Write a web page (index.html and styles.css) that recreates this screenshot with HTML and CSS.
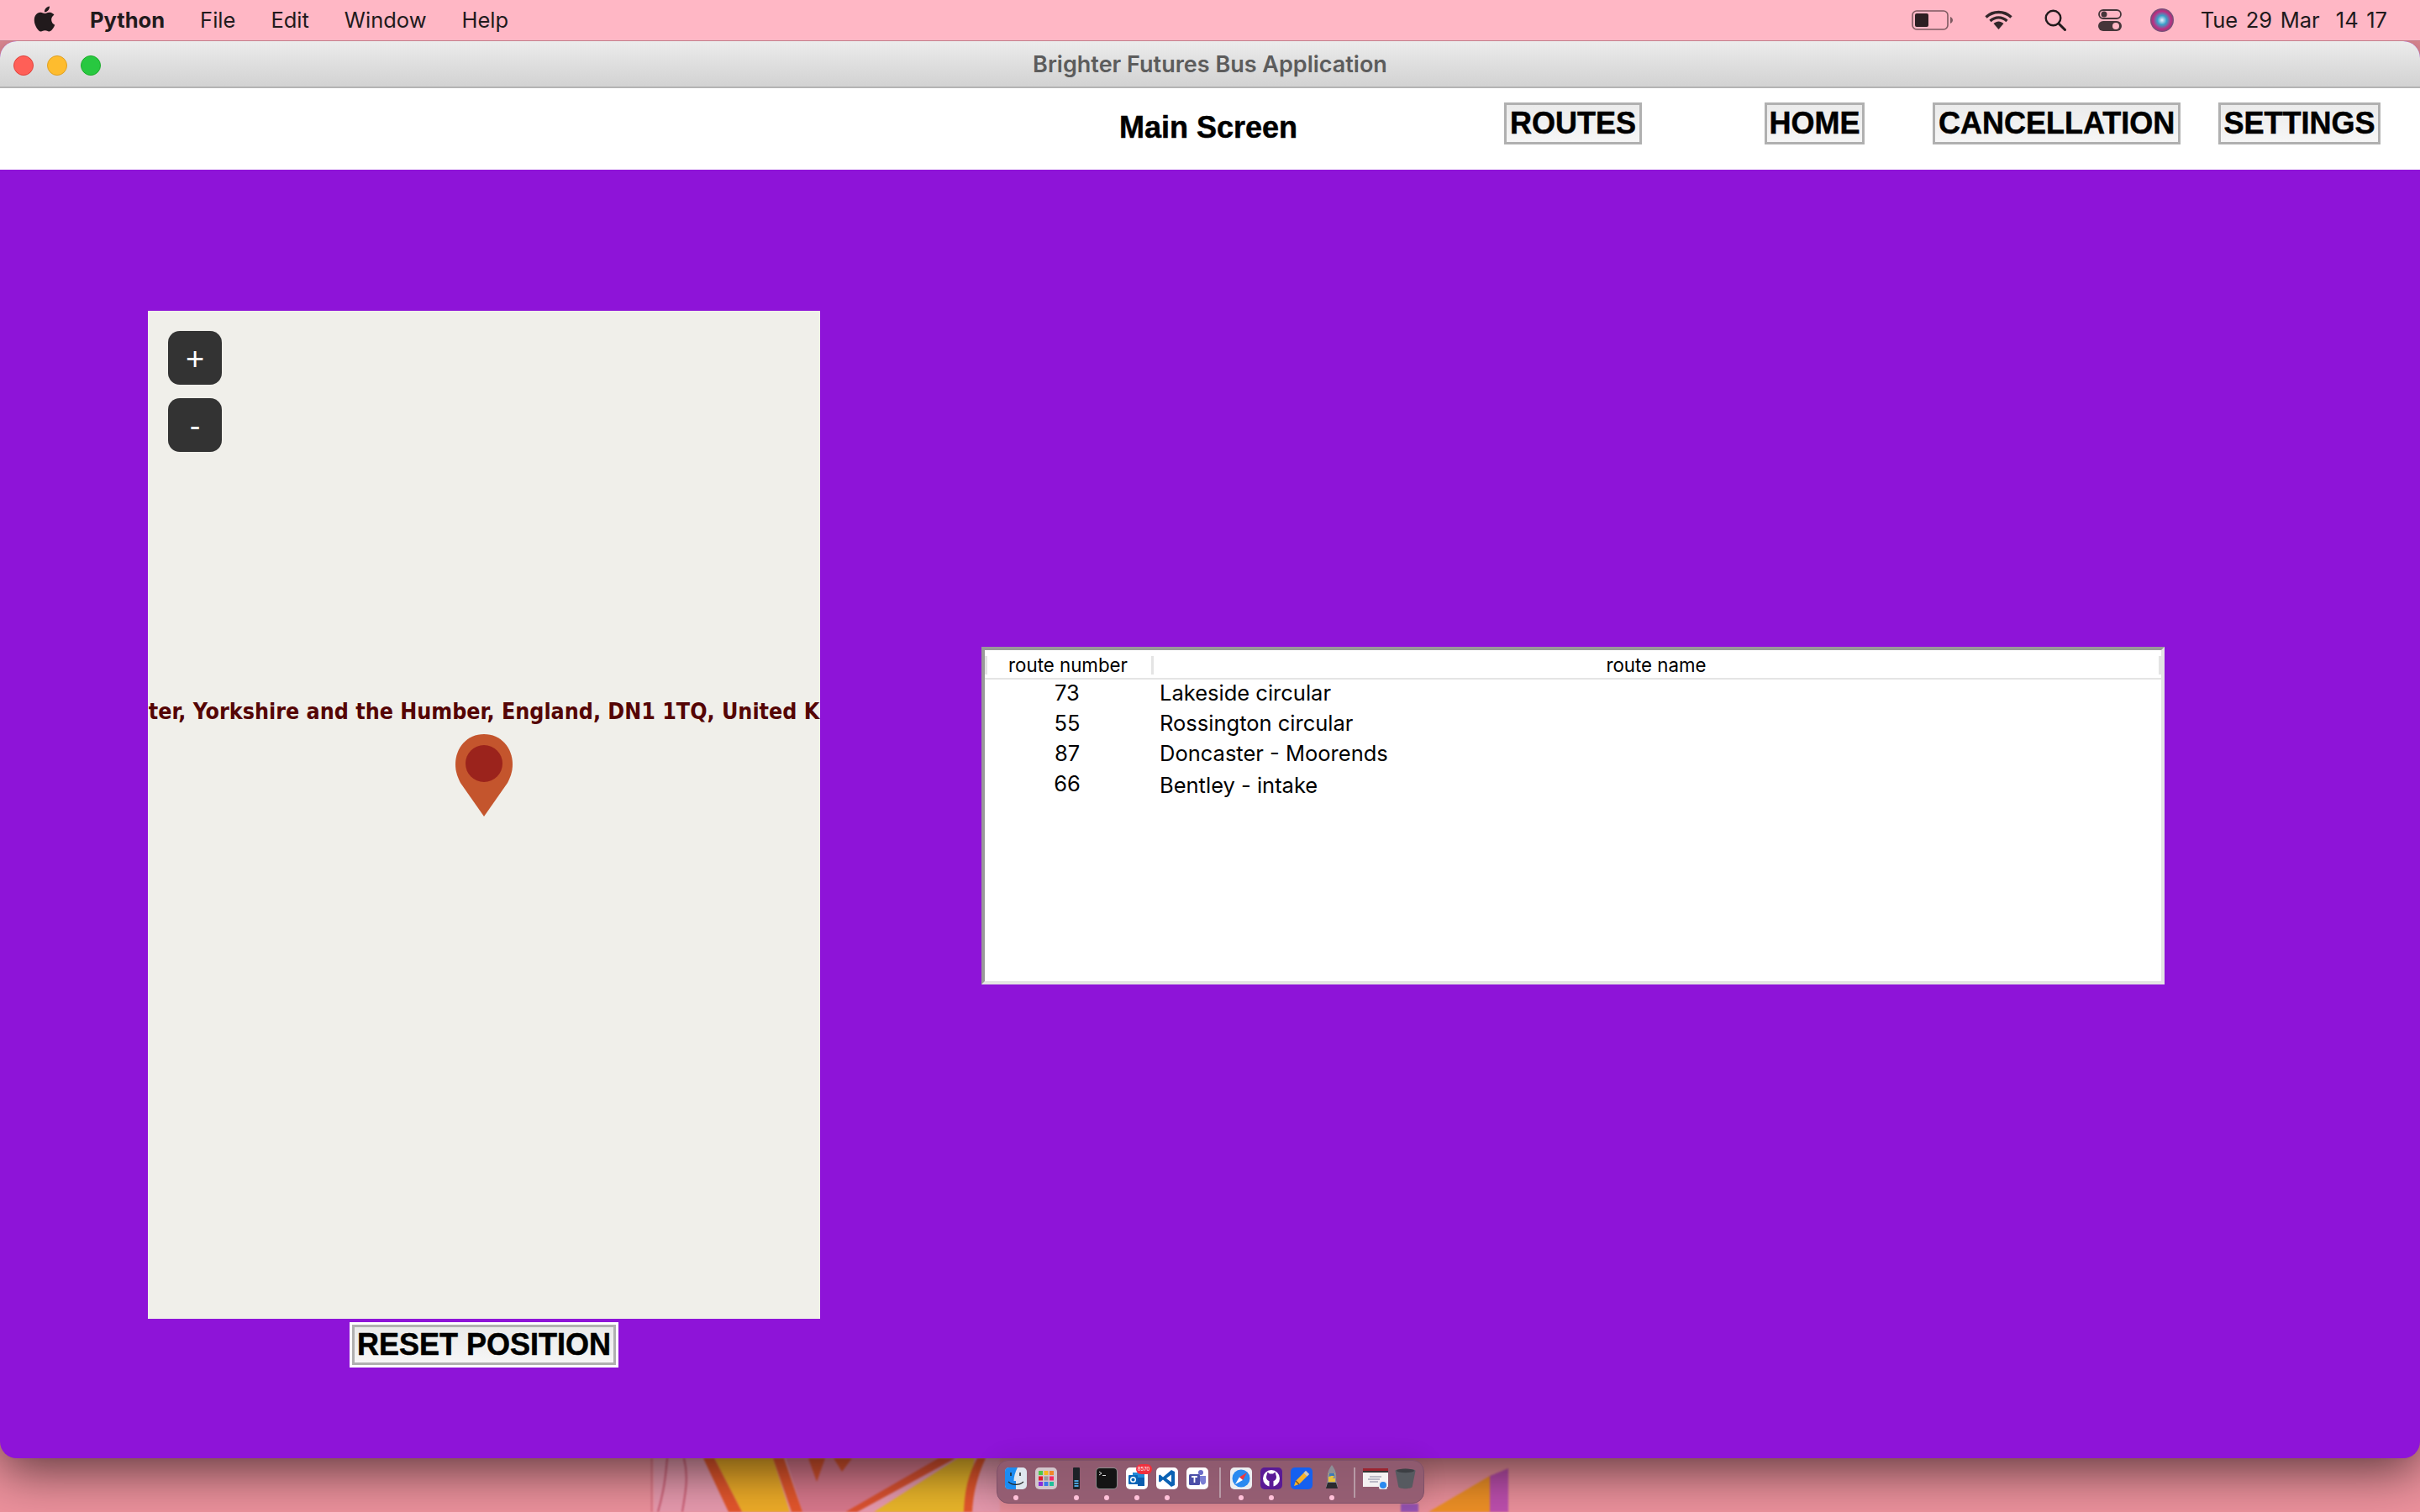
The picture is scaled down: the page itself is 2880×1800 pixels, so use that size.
FILE: index.html
```html
<!DOCTYPE html>
<html lang="en">
<head>
    <meta charset="UTF-8">
    <meta name="viewport" content="width=device-width, initial-scale=1.0">
    <title>Brighter Futures Bus Application</title>
    <link rel="stylesheet" href="styles.css">
</head>
<body>
<div class="screen">

  <!-- Wallpaper strip under the window -->
  <svg class="wallpaper" width="1100" height="64" viewBox="775 1736 1100 64">
    <path d="M778 1736H1190V1800H778Z" fill="#e79aae"/>
    <path d="M935 1736H1120L1006 1800H955Z" fill="#d8788c"/>
    <path d="M775 1736V1800M794 1736C792 1760 790 1775 783 1800M814 1736C820 1760 815 1780 812 1800" fill="none" stroke="#c95a70" stroke-width="2"/>
    <path d="M850 1736H920L940 1800H883Z" fill="#eeac28"/>
    <path d="M837 1736L867 1800H883L850 1736Z" fill="#e4562c"/>
    <path d="M920 1736L942 1800H955L933 1736Z" fill="#e4562c"/>
    <path d="M962 1736L972 1764L982 1736ZM992 1736L1002 1752L1014 1736Z" fill="#d9532e"/>
    <path d="M1117 1736H1137L1020 1800H1006Z" fill="#dc5230"/>
    <path d="M1140 1736H1160L1147 1800H1040Z" fill="#eab62a"/>
    <path d="M1163 1736H1173C1162 1760 1158 1780 1157 1800H1147C1148 1780 1150 1760 1163 1736Z" fill="#e4562c"/>
    <path d="M1700 1800L1773 1757V1800Z" fill="#ee9026"/>
    <path d="M1773 1757L1795 1748V1800H1773Z" fill="#bd4fae"/>
    <path d="M1667 1790H1688V1800H1667Z" fill="#9a56b8"/>
  </svg>

  <!-- Menu bar -->
  <header class="menubar">
    <svg class="apple" viewBox="0 0 24 24"><path fill="#211a1c" d="M12.152 6.896c-.948 0-2.415-1.078-3.96-1.04-2.04.027-3.91 1.183-4.961 3.014-2.117 3.675-.546 9.103 1.519 12.09 1.013 1.454 2.208 3.09 3.792 3.039 1.52-.065 2.09-.987 3.935-.987 1.831 0 2.35.987 3.96.948 1.637-.026 2.676-1.48 3.676-2.948 1.156-1.688 1.636-3.325 1.662-3.415-.039-.013-3.182-1.221-3.22-4.857-.026-3.04 2.48-4.494 2.597-4.559-1.429-2.09-3.623-2.324-4.39-2.376-2-.156-3.675 1.09-4.61 1.09zM15.53 3.83c.843-1.012 1.4-2.427 1.245-3.83-1.207.052-2.662.805-3.532 1.818-.78.896-1.454 2.338-1.273 3.714 1.338.104 2.715-.688 3.559-1.701"/></svg>
    <nav class="menu-items">
      <span class="app-name">Python</span>
      <span>File</span>
      <span>Edit</span>
      <span>Window</span>
      <span>Help</span>
    </nav>
    <div class="status">
      <svg class="st-battery" width="50" height="24" viewBox="0 0 50 24">
        <rect x="1" y="1" width="42" height="22" rx="5" fill="none" stroke="#7d5a60" stroke-width="1.6"/>
        <rect x="4" y="4" width="16" height="16" rx="2" fill="#2c1f22"/>
        <path d="M46 8C48 9 49 10.5 49 12S48 15 46 16Z" fill="#7d5a60"/>
      </svg>
      <svg class="st-wifi" width="33" height="24" viewBox="0 0 33 24">
        <path d="M1.5 8.5C10 .5 23 .5 31.5 8.5M6.5 13C12.5 7.5 20.5 7.500 26.500 13" fill="none" stroke="#33262a" stroke-width="3.400"/>
        <path d="M10.500 16C14.500 12.500 18.500 12.500 22.500 16L16.500 23Z" fill="#33262a"/>
      </svg>
      <svg class="st-search" width="26" height="26" viewBox="0 0 26 26">
        <circle cx="10.500" cy="10.500" r="8.800" fill="none" stroke="#211a1c" stroke-width="2.400"/>
        <path d="M17 17L24.500 24.500" stroke="#211a1c" stroke-width="3" stroke-linecap="round"/>
      </svg>
      <svg class="st-control" width="28" height="26" viewBox="0 0 28 26">
        <rect x="1" y="1" width="26" height="10" rx="5" fill="none" stroke="#46363a" stroke-width="1.800"/>
        <circle cx="7" cy="6" r="3.500" fill="#46363a"/>
        <rect y="14" width="28" height="12" rx="6" fill="#46363a"/>
        <circle cx="21" cy="20" r="4" fill="#ffb7c5"/>
      </svg>
      <span class="st-siri"></span>
      <span class="clock">Tue 29 Mar  14 17</span>
    </div>
  </header>

  <!-- App window -->
  <main class="window">
    <div class="titlebar">
      <div class="lights">
        <span class="light red"></span>
        <span class="light yellow"></span>
        <span class="light green"></span>
      </div>
      <span class="window-title">Brighter Futures Bus Application</span>
    </div>

    <div class="topbar">
      <h1 class="screen-title">Main Screen</h1>
      <button class="nav-btn routes">ROUTES</button>
      <button class="nav-btn home">HOME</button>
      <button class="nav-btn cancellation">CANCELLATION</button>
      <button class="nav-btn settings">SETTINGS</button>
    </div>

    <div class="content">
      <section class="map-col">
        <div class="map">
          <div class="zoom-controls">
            <button class="zoom-btn">+</button>
            <button class="zoom-btn">-</button>
          </div>
          <div class="map-label">ter, Yorkshire and the Humber, England, DN1 1TQ, United K</div>
          <svg class="map-pin" width="68" height="98" viewBox="0 0 68 98">
            <path d="M34 0C14 0 0 16 0 36C0 45 3 52 6 58L34 98L62 58C65 52 68 45 68 36C68 16 54 0 34 0Z" fill="#c4552d"/>
            <circle cx="34" cy="35" r="22" fill="#9b231c"/>
          </svg>
        </div>
        <button class="reset-btn">RESET POSITION</button>
      </section>

      <!-- Routes table -->
      <section class="routes-table">
        <div class="table-head">
          <div class="th th-number">route number</div>
          <div class="th th-name">route name</div>
        </div>
        <div class="table-row"><span class="td-number">73</span><span>Lakeside circular</span></div>
        <div class="table-row"><span class="td-number">55</span><span>Rossington circular</span></div>
        <div class="table-row"><span class="td-number">87</span><span>Doncaster - Moorends</span></div>
        <div class="table-row"><span class="td-number">66</span><span class="td-low">Bentley - intake</span></div>
      </section>
    </div>
  </main>

  <!-- Dock -->
  <div class="dock-area">
    <div class="dock">
      <div class="dock-item">
        <svg class="icon" viewBox="0 0 26 26">
          <rect width="26" height="26" rx="5" fill="#dfe6ee"/>
          <path d="M5 0H15C12 6 10.500 11 10.500 16H13V26H5Q0 26 0 21V5Q0 0 5 0Z" fill="#1c8cf2"/>
          <path d="M7 6V10M18 6V10" stroke="#222" stroke-width="1.500"/>
          <path d="M4 17C9 21.500 17 21.500 22 17" fill="none" stroke="#222" stroke-width="1.200"/>
        </svg>
        <span class="dot"></span>
      </div>
      <div class="dock-item">
        <svg class="icon" viewBox="0 0 26 26">
          <rect width="26" height="26" rx="5" fill="#d2c6cc"/>
          <rect x="4" y="4" width="5" height="5" fill="#4cc84a"/><rect x="10.500" y="4" width="5" height="5" fill="#f5b81e"/><rect x="17" y="4" width="5" height="5" fill="#f0862a"/>
          <rect x="4" y="10.500" width="5" height="5" fill="#e21a2c"/><rect x="10.500" y="10.500" width="5" height="5" fill="#9a9a9a"/><rect x="17" y="10.500" width="5" height="5" fill="#f02c68"/>
          <rect x="4" y="17" width="5" height="5" fill="#8a2cd8"/><rect x="10.500" y="17" width="5" height="5" fill="#3a78ea"/><rect x="17" y="17" width="5" height="5" fill="#20c09a"/>
        </svg>
        <span class="dot off"></span>
      </div>
      <div class="dock-item">
        <svg class="icon" viewBox="0 0 26 26">
          <rect x="9" width="8" height="26" rx="1" fill="#1c2228"/>
          <path d="M10.500 15H15.500V17H10.500ZM10.500 18H15.500V20H10.500ZM10.500 21H15.500V23H10.500Z" fill="#4aa0d8"/>
        </svg>
        <span class="dot"></span>
      </div>
      <div class="dock-item">
        <svg class="icon" viewBox="0 0 26 26">
          <rect width="26" height="26" rx="5" fill="#8c8c8c"/>
          <rect x="1" y="1" width="24" height="24" rx="4" fill="#141414"/>
          <path d="M4 5L7 7L4 9" fill="none" stroke="#ddd" stroke-width="1"/>
          <path d="M8 9.500H12" stroke="#ddd" stroke-width="1"/>
        </svg>
        <span class="dot"></span>
      </div>
      <div class="dock-item">
        <svg class="icon" viewBox="0 0 26 26">
          <rect width="26" height="26" rx="5" fill="#fff"/>
          <rect x="8" y="6" width="14" height="14" fill="#1f8ad8"/>
          <rect x="14" y="12" width="8" height="10" fill="#0b5cae"/>
          <rect x="3" y="9" width="11" height="11" rx="1" fill="#0a66b8"/>
          <circle cx="8.500" cy="14.500" r="2.800" fill="none" stroke="#fff" stroke-width="1.400"/>
        </svg>
        <span class="badge">8570</span>
        <span class="dot"></span>
      </div>
      <div class="dock-item">
        <svg class="icon" viewBox="0 0 26 26">
          <rect width="26" height="26" rx="5" fill="#fff"/>
          <path d="M18 3L22 5V21L18 23L8 14.500L4.500 17.500L3 16.500V9.500L4.500 8.500L8 11.500ZM18 8.500L12 13L18 17.500Z" fill="#0a62b4"/>
        </svg>
        <span class="dot"></span>
      </div>
      <div class="dock-item">
        <svg class="icon" viewBox="0 0 26 26">
          <rect width="26" height="26" rx="5" fill="#fff"/>
          <circle cx="17" cy="6" r="3" fill="#6a6cc8"/>
          <path d="M13 10H23V17C23 20 20 21 18 20Z" fill="#7b7fd4"/>
          <rect x="3" y="8" width="13" height="13" rx="1.500" fill="#4b4fa8"/>
          <path d="M6 11H13M9.500 11V18" stroke="#fff" stroke-width="1.800"/>
        </svg>
        <span class="dot off"></span>
      </div>
      <span class="dock-sep"></span>
      <div class="dock-item">
        <svg class="icon" viewBox="0 0 26 26">
          <rect width="26" height="26" rx="5" fill="#eceef0"/>
          <circle cx="13" cy="13" r="10.500" fill="#2a8af0"/>
          <path d="M20 6L11 11.500L15 15Z" fill="#f0383a"/>
          <path d="M6 20L11 11.500L15 15Z" fill="#fff"/>
        </svg>
        <span class="dot"></span>
      </div>
      <div class="dock-item">
        <svg class="icon" viewBox="0 0 26 26">
          <rect width="26" height="26" rx="5" fill="#5a1a96"/>
          <circle cx="13" cy="13" r="10" fill="#fff"/>
          <path d="M8.500 5.500L11 7.500H15L17.500 5.500L18.500 9C20 12.500 18 15.500 15.500 16V23H10.500V16C8 15.500 6 12.500 7.500 9Z" fill="#5a1a96"/>
        </svg>
        <span class="dot"></span>
      </div>
      <div class="dock-item">
        <svg class="icon" viewBox="0 0 26 26">
          <rect width="26" height="26" rx="5" fill="#1560f0"/>
          <path d="M18 4L22 8L10 20L4 22L6 16Z" fill="#f6b32a"/>
          <path d="M18 4L22 8L19.500 10.500L15.500 6.500Z" fill="#c8c8c8"/>
          <path d="M6 16L10 20" stroke="#7a4a18" stroke-width="1.200"/>
        </svg>
        <span class="dot off"></span>
      </div>
      <div class="dock-item">
        <svg class="icon" viewBox="0 0 26 26">
          <path d="M13 -3C17 2 19 8 18 15L20 23H6L8 15C7 8 9 2 13 -3Z" fill="#8d8f96"/>
          <path d="M9 7H17L14 13H17V17H9V11H12Z" fill="#e8c23a"/>
          <path d="M10 7H16V10H10Z" fill="#3f78b4"/>
          <path d="M8 18H18L20 25H6Z" fill="#2a2a2e"/>
        </svg>
        <span class="dot"></span>
      </div>
      <span class="dock-sep sep-last"></span>
      <div class="dock-item">
        <svg class="icon icon-wide" viewBox="0 0 30 26">
          <rect y="1" width="30" height="22" fill="#f4f2f2"/>
          <rect y="1" width="30" height="3" fill="#9c2430"/>
          <rect y="4" width="30" height="2" fill="#333"/>
          <path d="M8 11H22M6 14H20M8 17H18" stroke="#a8a8b8" stroke-width="1.500"/>
          <rect x="19" y="16" width="10" height="10" rx="2" fill="#eee"/>
          <circle cx="24" cy="21" r="4" fill="#2a8af0"/>
        </svg>
        <span class="dot off"></span>
      </div>
      <div class="dock-item trash">
        <svg class="icon icon-trash" viewBox="0 0 25 27">
          <path d="M0 4C0 1 25 1 25 4L21 24C20 27 5 27 4 24Z" fill="#565a60"/>
          <ellipse cx="12.500" cy="4" rx="11" ry="2.500" fill="#3c3f44"/>
        </svg>
        <span class="dot off"></span>
      </div>
    </div>
  </div>
</div>
</body>
</html>
```

FILE: styles.css
```css
* {
  box-sizing: border-box;
}

html,
body {
  margin: 0;
  padding: 0;
}

body {
  width: 2880px;
  height: 1800px;
  overflow: hidden;
}

.screen {
  position: relative;
  width: 2880px;
  height: 1800px;
  overflow: hidden;
  display: flex;
  flex-direction: column;
  background: #ec919c;
  font-family: "Inter", "Liberation Sans", sans-serif;
}

.wallpaper {
  position: absolute;
  left: 775px;
  top: 1736px;
  filter: blur(1px);
}

/* Menu bar */
.menubar {
  position: relative;
  z-index: 3;
  height: 49px;
  flex-shrink: 0;
  display: flex;
  align-items: center;
  background: #ffb7c5;
  border-bottom: 1px solid #c4808c;
  color: #211a1c;
  font-size: 25.5px;
}

.apple {
  width: 30px;
  height: 31px;
  margin: -3px 0 0 38px;
}

.menu-items {
  display: flex;
  gap: 42px;
  margin-left: 39px;
  padding-bottom: 2px;
}

.app-name {
  font-weight: 700;
}

.status {
  display: flex;
  align-items: center;
  margin-left: auto;
  padding-right: 39px;
}

.st-wifi {
  margin-left: 37px;
}

.st-search {
  margin-left: 38px;
}

.st-control {
  margin-left: 38px;
}

.st-siri {
  width: 28px;
  height: 28px;
  margin-left: 34px;
  border-radius: 50%;
  background: radial-gradient(circle at 50% 50%, #e8f0ff 0, #3aa0c8 28%, #c02a80 55%, #1e7a70 85%);
}

.clock {
  margin-left: 32px;
  padding-bottom: 2px;
  white-space: pre;
  word-spacing: 2.4px;
}

/* Window */
.window {
  position: relative;
  z-index: 2;
  height: 1687px;
  flex-shrink: 0;
  display: flex;
  flex-direction: column;
  overflow: visible;
  border-radius: 20px;
  background: #8e14d8;
  box-shadow: 0 14px 60px rgba(0, 0, 0, 0.62);
}

.titlebar {
  position: relative;
  height: 56px;
  flex-shrink: 0;
  display: flex;
  align-items: center;
  justify-content: center;
  border-radius: 20px 20px 0 0;
  border-bottom: 2px solid #b4b4b4;
  background: linear-gradient(#ececec, #d2d2d2);
}

.lights {
  position: absolute;
  left: 16px;
  top: 17px;
  display: flex;
  gap: 16px;
}

.light {
  width: 24px;
  height: 24px;
  border-radius: 50%;
}

.red {
  background: #ff5f57;
  border: 1px solid #e0443e;
}

.yellow {
  background: #febc2e;
  border: 1px solid #dfa023;
}

.green {
  background: #28c840;
  border: 1px solid #1dad2b;
}

.window-title {
  font-size: 27px;
  font-weight: 600;
  color: #5c5c5c;
}

/* White bar with the screen name and buttons */
.topbar {
  height: 97px;
  flex-shrink: 0;
  display: flex;
  align-items: flex-start;
  padding: 17px 0 0 1332px;
  background: #fff;
  font-family: "Liberation Sans", sans-serif;
}

.screen-title {
  margin: 6px 0 0;
  font-size: 36px;
  font-weight: 700;
  line-height: 48px;
  color: #000;
  -webkit-text-stroke: 0.5px #000;
}

.nav-btn {
  height: 50px;
  padding: 0;
  border: 3px solid #b0b0b0;
  background: linear-gradient(#ebebeb, #f6f6f6);
  font-family: "Liberation Sans", sans-serif;
  font-size: 36px;
  font-weight: 700;
  line-height: 40px;
  color: #000;
  -webkit-text-stroke: 0.5px #000;
}

.routes {
  width: 164px;
  margin-left: 246px;
}

.home {
  width: 119px;
  margin-left: 146px;
}

.cancellation {
  width: 295px;
  margin-left: 81px;
}

.settings {
  width: 193px;
  margin-left: 45px;
}

/* Purple content area */
.content {
  flex: 1;
  display: flex;
  align-items: flex-start;
  padding: 168px 0 0 176px;
}

.map-col {
  width: 800px;
  display: flex;
  flex-direction: column;
  align-items: center;
  gap: 4px;
}

.map {
  position: relative;
  width: 800px;
  height: 1200px;
  overflow: hidden;
  background: #f0efea;
}

.zoom-controls {
  position: absolute;
  left: 24px;
  top: 24px;
  display: flex;
  flex-direction: column;
  gap: 16px;
}

.zoom-btn {
  width: 64px;
  height: 64px;
  padding: 3px 0 0;
  border: none;
  border-radius: 14px;
  background: #333;
  color: #fff;
  font-family: "Liberation Sans", sans-serif;
  font-size: 38px;
}

.map-label {
  position: absolute;
  left: 0;
  top: 461px;
  width: 800px;
  white-space: nowrap;
  text-align: center;
  font-family: "DejaVu Sans Condensed", "DejaVu Sans", sans-serif;
  font-stretch: condensed;
  font-size: 26.6px;
  font-weight: 700;
  line-height: 32px;
  color: #550505;
}

.map-pin {
  position: absolute;
  left: 366px;
  top: 504px;
}

.reset-btn {
  width: 320px;
  height: 54px;
  padding: 0;
  border: 3px solid #fff;
  box-shadow: inset 0 0 0 3px #b0b0b0;
  background: linear-gradient(#e9e9e9, #f7f7f7);
  font-family: "Liberation Sans", sans-serif;
  font-size: 36px;
  font-weight: 700;
  color: #000;
  -webkit-text-stroke: 0.5px #000;
}

/* Routes table */
.routes-table {
  width: 1408px;
  height: 402px;
  margin: 400px 0 0 192px;
  border: 4px solid #e4e4e4;
  border-top-color: #999;
  border-left-color: #999;
  background: #fff;
  font-size: 25.5px;
  color: #000;
}

.table-head {
  height: 35px;
  display: flex;
  align-items: center;
  padding-top: 2px;
  border-bottom: 2px solid #e4e4e4;
  font-size: 22.3px;
}

.th {
  height: 22px;
  display: flex;
  align-items: center;
  justify-content: center;
  border-right: 3px solid #e4e4e4;
}

.th-number {
  width: 201px;
  padding-right: 3px;
  border-left: 3px solid #e4e4e4;
}

.th-name {
  flex: 1;
}

.table-row {
  height: 36px;
  display: flex;
  align-items: center;
  padding-bottom: 6px;
}

.td-number {
  width: 196px;
  margin-right: 12px;
  text-align: center;
}

.td-low {
  padding-top: 4px;
}

/* Dock */
.dock-area {
  position: relative;
  z-index: 4;
  flex: 1;
  display: flex;
  justify-content: center;
  padding-top: 2px;
}

.dock {
  height: 52px;
  display: flex;
  align-items: flex-start;
  gap: 10px;
  padding: 8px 9px 0;
  border: 1px solid #7e5068;
  border-radius: 14px;
  background: rgba(142, 90, 112, 0.92);
  box-shadow: 0 0 30px rgba(0, 0, 0, 0.12);
}

.dock-item {
  position: relative;
  display: flex;
  flex-direction: column;
  align-items: center;
  gap: 7px;
}

.trash {
  margin-left: -2px;
}

.icon {
  display: block;
  width: 26px;
  height: 26px;
  overflow: visible;
}

.icon-wide {
  width: 30px;
}

.icon-trash {
  width: 25px;
}

.dot {
  width: 6px;
  height: 6px;
  border-radius: 50%;
  background: #ffc0d8;
}

.dot.off {
  visibility: hidden;
}

.badge {
  position: absolute;
  left: 12px;
  top: -4px;
  width: 19px;
  height: 12px;
  border-radius: 6px;
  background: #f0303e;
  color: #fff;
  font-size: 6px;
  line-height: 12px;
  text-align: center;
}

.dock-sep {
  width: 2px;
  height: 36px;
  margin: 0 1px 0 3px;
  background: #b79aa6;
}

.sep-last {
  margin-right: -1px;
}
```
